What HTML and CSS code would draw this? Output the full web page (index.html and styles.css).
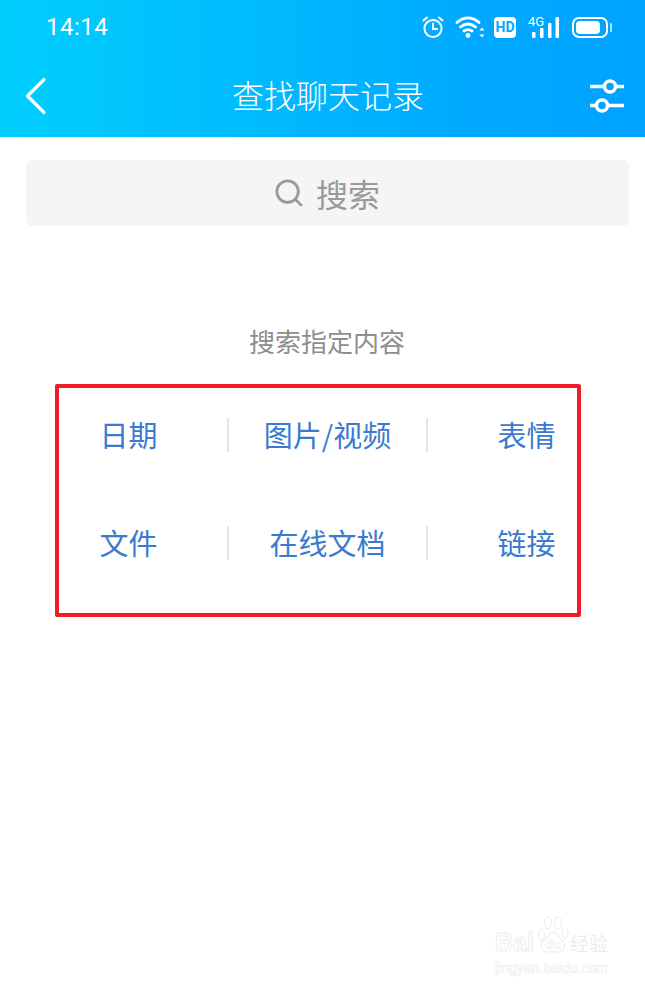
FILE: index.html
```html
<!DOCTYPE html>
<html lang="zh-CN">
<head>
  <meta charset="UTF-8" />
  <title>查找聊天记录</title>
  <link rel="stylesheet" href="styles.css">
</head>
<body>
  <div class="header">
    <div class="status-bar">
      <span class="time">14:14</span>
      <div class="status-icons">
        <svg class="icon-alarm" viewBox="0 0 24 24" width="24" height="24" fill="none" stroke="#fff" stroke-width="2" stroke-linecap="round">
          <circle cx="12" cy="13.500" r="8.600"/>
          <path d="M12 8.500v5.500h4M2.500 5.500L6 2.500M21.500 5.500L18 2.500"/>
        </svg>
        <svg class="icon-wifi" viewBox="0 0 30 24" width="30" height="24" fill="none" stroke="#fff" stroke-width="2.800" stroke-linecap="round">
          <path d="M2 7.500C9 1.500 17 1.500 24 7.500M5.500 12C10.500 8 15.500 8 20.500 12M9 16c2.800-2 5.200-2 8 0"/>
          <circle cx="13" cy="20.500" r="2.400" fill="#fff" stroke="none"/>
          <path d="M27 12.500l2.500 3h-5zM27 22.500l2.500-3h-5z" fill="#fff" stroke="none"/>
        </svg>
        <div class="hd-badge">HD</div>
        <div class="signal">
          <span class="signal-4g">4G</span>
          <svg viewBox="0 0 27 22" width="27" height="22" fill="#fff">
            <rect x="0" y="16" width="3.500" height="6" rx="1"/>
            <rect x="8" y="12" width="3.500" height="10" rx="1"/>
            <rect x="16" y="7" width="3.500" height="15" rx="1"/>
            <rect x="23.500" y="1" width="3.500" height="21" rx="1"/>
          </svg>
        </div>
        <div class="battery"><div class="battery-fill"></div></div>
      </div>
    </div>
    <div class="nav-bar">
      <svg class="back" viewBox="0 0 24 38" width="24" height="38" fill="none" stroke="#fff" stroke-width="3.200" stroke-linecap="round" stroke-linejoin="round">
        <path d="M20 2.500L3.500 19L20 35.500"/>
      </svg>
      <h1 class="title">查找聊天记录</h1>
      <svg class="filter" viewBox="0 0 36 34" width="36" height="34" fill="none" stroke="#fff" stroke-width="3.500">
        <path d="M1 7.500h14M27 7.500h8M1 26.500h6M19 26.500h16"/>
        <circle cx="21" cy="7.500" r="5.500"/>
        <circle cx="13" cy="26.500" r="5.500"/>
      </svg>
    </div>
  </div>

  <div class="search-box">
    <svg viewBox="0 0 30 30" width="28" height="28" fill="none" stroke="#999" stroke-width="3" stroke-linecap="round">
      <circle cx="13.500" cy="13.500" r="11.500"/>
      <path d="M22 22l6 6"/>
    </svg>
    <span>搜索</span>
  </div>

  <p class="hint">搜索指定内容</p>

  <div class="type-grid">
    <div class="type-item">日期</div>
    <div class="type-item">图片/视频</div>
    <div class="type-item">表情</div>
    <div class="type-item">文件</div>
    <div class="type-item">在线文档</div>
    <div class="type-item">链接</div>
  </div>

  <div class="red-box"></div>

  <div class="watermark">
    <div class="wm-top">
      <span class="wm-bai">Bai</span>
      <svg viewBox="0 0 32 40" width="32" height="40" fill="none" stroke="#eeeeee" stroke-width="1.200">
        <ellipse cx="4.500" cy="19" rx="3" ry="5"/>
        <ellipse cx="11" cy="7" rx="3.500" ry="6"/>
        <ellipse cx="21" cy="7" rx="3.500" ry="6"/>
        <ellipse cx="28" cy="17" rx="3" ry="5"/>
        <path d="M16 16c-4 0-5 5-9 8-5 4-2 13 5 12 3-.5 5-.5 8 0 7 1 10-8 5-12-4-3-5-8-9-8z"/>
        <text x="16" y="33" text-anchor="middle" class="wm-du">du</text>
      </svg>
      <span class="wm-jy">经验</span>
    </div>
    <div class="wm-url">jingyan.baidu.com</div>
  </div>
</body>
</html>
```

FILE: styles.css
```css
* { box-sizing: border-box; }
body {
  font-family: "Noto Sans CJK SC", "Noto Sans", sans-serif;
  background: #fff;
  margin: 0;
  padding: 0;
  width: 645px;
  height: 987px;
  overflow: hidden;
  position: relative;
}
.header {
  height: 137px;
  background: linear-gradient(90deg, #00cffd, #00bdfe 35%, #00a8ff 75%, #00a3ff);
  color: #fff;
}
.status-bar {
  height: 54px;
  display: flex;
  align-items: center;
  justify-content: space-between;
  padding: 0 37px 0 46px;
}
.time {
  font-family: Roboto, sans-serif;
  font-size: 24px;
  letter-spacing: .5px;
}
.status-icons {
  display: flex;
  align-items: center;
}
.icon-alarm { margin-right: 10px; }
.icon-wifi { margin-right: 9px; }
.hd-badge {
  width: 22px;
  height: 21px;
  border-radius: 4px;
  background: #fff;
  color: #00a8ff;
  font-family: Roboto, sans-serif;
  font-size: 14px;
  font-weight: 700;
  line-height: 21px;
  text-align: center;
  margin-right: 12px;
}
.signal {
  display: flex;
  justify-content: flex-end;
  position: relative;
  width: 31px;
  height: 22px;
  margin-right: 13px;
}
.signal-4g {
  position: absolute;
  left: 0;
  top: -1px;
  font-family: Roboto, sans-serif;
  font-size: 13px;
  line-height: 13px;
}
.battery {
  width: 36px;
  height: 21px;
  border: 2px solid #fff;
  border-radius: 7px;
  padding: 2px;
  position: relative;
}
.battery:after {
  content: "";
  position: absolute;
  right: -6px;
  top: 4px;
  width: 2px;
  height: 9px;
  background: rgba(255, 255, 255, .7);
  border-radius: 1px;
}
.battery-fill {
  width: 24px;
  height: 13px;
  background: #fff;
  border-radius: 4px;
}
.nav-bar {
  height: 83px;
  display: flex;
  align-items: center;
  justify-content: space-between;
  padding: 0 20px 0 24px;
}
.title {
  margin: 0 0 4px 19px;
  font-size: 32px;
  font-weight: 300;
  line-height: 1;
}
.search-box {
  height: 66px;
  margin: 23px 16px 0 26px;
  background: #f5f5f5;
  border-radius: 6px;
  display: flex;
  align-items: center;
  justify-content: center;
  gap: 13px;
  color: #999;
  font-size: 32px;
}
.hint {
  margin: 97px 0 0;
  padding-left: 9px;
  text-align: center;
  color: #8e8e8e;
  font-size: 26px;
  line-height: 36px;
}
.type-grid {
  display: grid;
  grid-template-columns: repeat(3, 199px);
  grid-auto-rows: 108px;
  margin: 23px 0 0 29px;
}
.type-item {
  display: flex;
  align-items: center;
  justify-content: center;
  padding-bottom: 4px;
  color: #3a7ad0;
  font-size: 29px;
  position: relative;
}
.type-item:nth-child(3n+1):after,
.type-item:nth-child(3n+2):after {
  content: "";
  position: absolute;
  right: -1px;
  top: 36px;
  width: 2px;
  height: 34px;
  background: #e4e4e4;
}
.red-box {
  position: absolute;
  left: 55px;
  top: 384px;
  width: 526px;
  height: 233px;
  border: 4px solid #f01c2a;
  border-radius: 2px;
}
.watermark {
  position: absolute;
  left: 495px;
  top: 916px;
  width: 120px;
  color: #fff;
}
.wm-top {
  display: flex;
  align-items: flex-end;
  height: 40px;
}
.wm-bai {
  font-family: "Liberation Sans", sans-serif;
  font-size: 25px;
  font-weight: 700;
  line-height: 28px;
  margin-right: 3px;
  -webkit-text-stroke: 1px #eeeeee;
}
.wm-du {
  font-family: "Liberation Sans", sans-serif;
  font-size: 13px;
  font-weight: 700;
  fill: #fff;
  stroke-width: .6;
}
.wm-jy {
  font-size: 19px;
  line-height: 26px;
  margin-left: 1px;
  color: #ececec;
}
.wm-url {
  font-family: "Liberation Sans", sans-serif;
  font-size: 14px;
  line-height: 20px;
  margin-top: 2px;
  white-space: nowrap;
  -webkit-text-stroke: .6px #eeeeee;
}
```
